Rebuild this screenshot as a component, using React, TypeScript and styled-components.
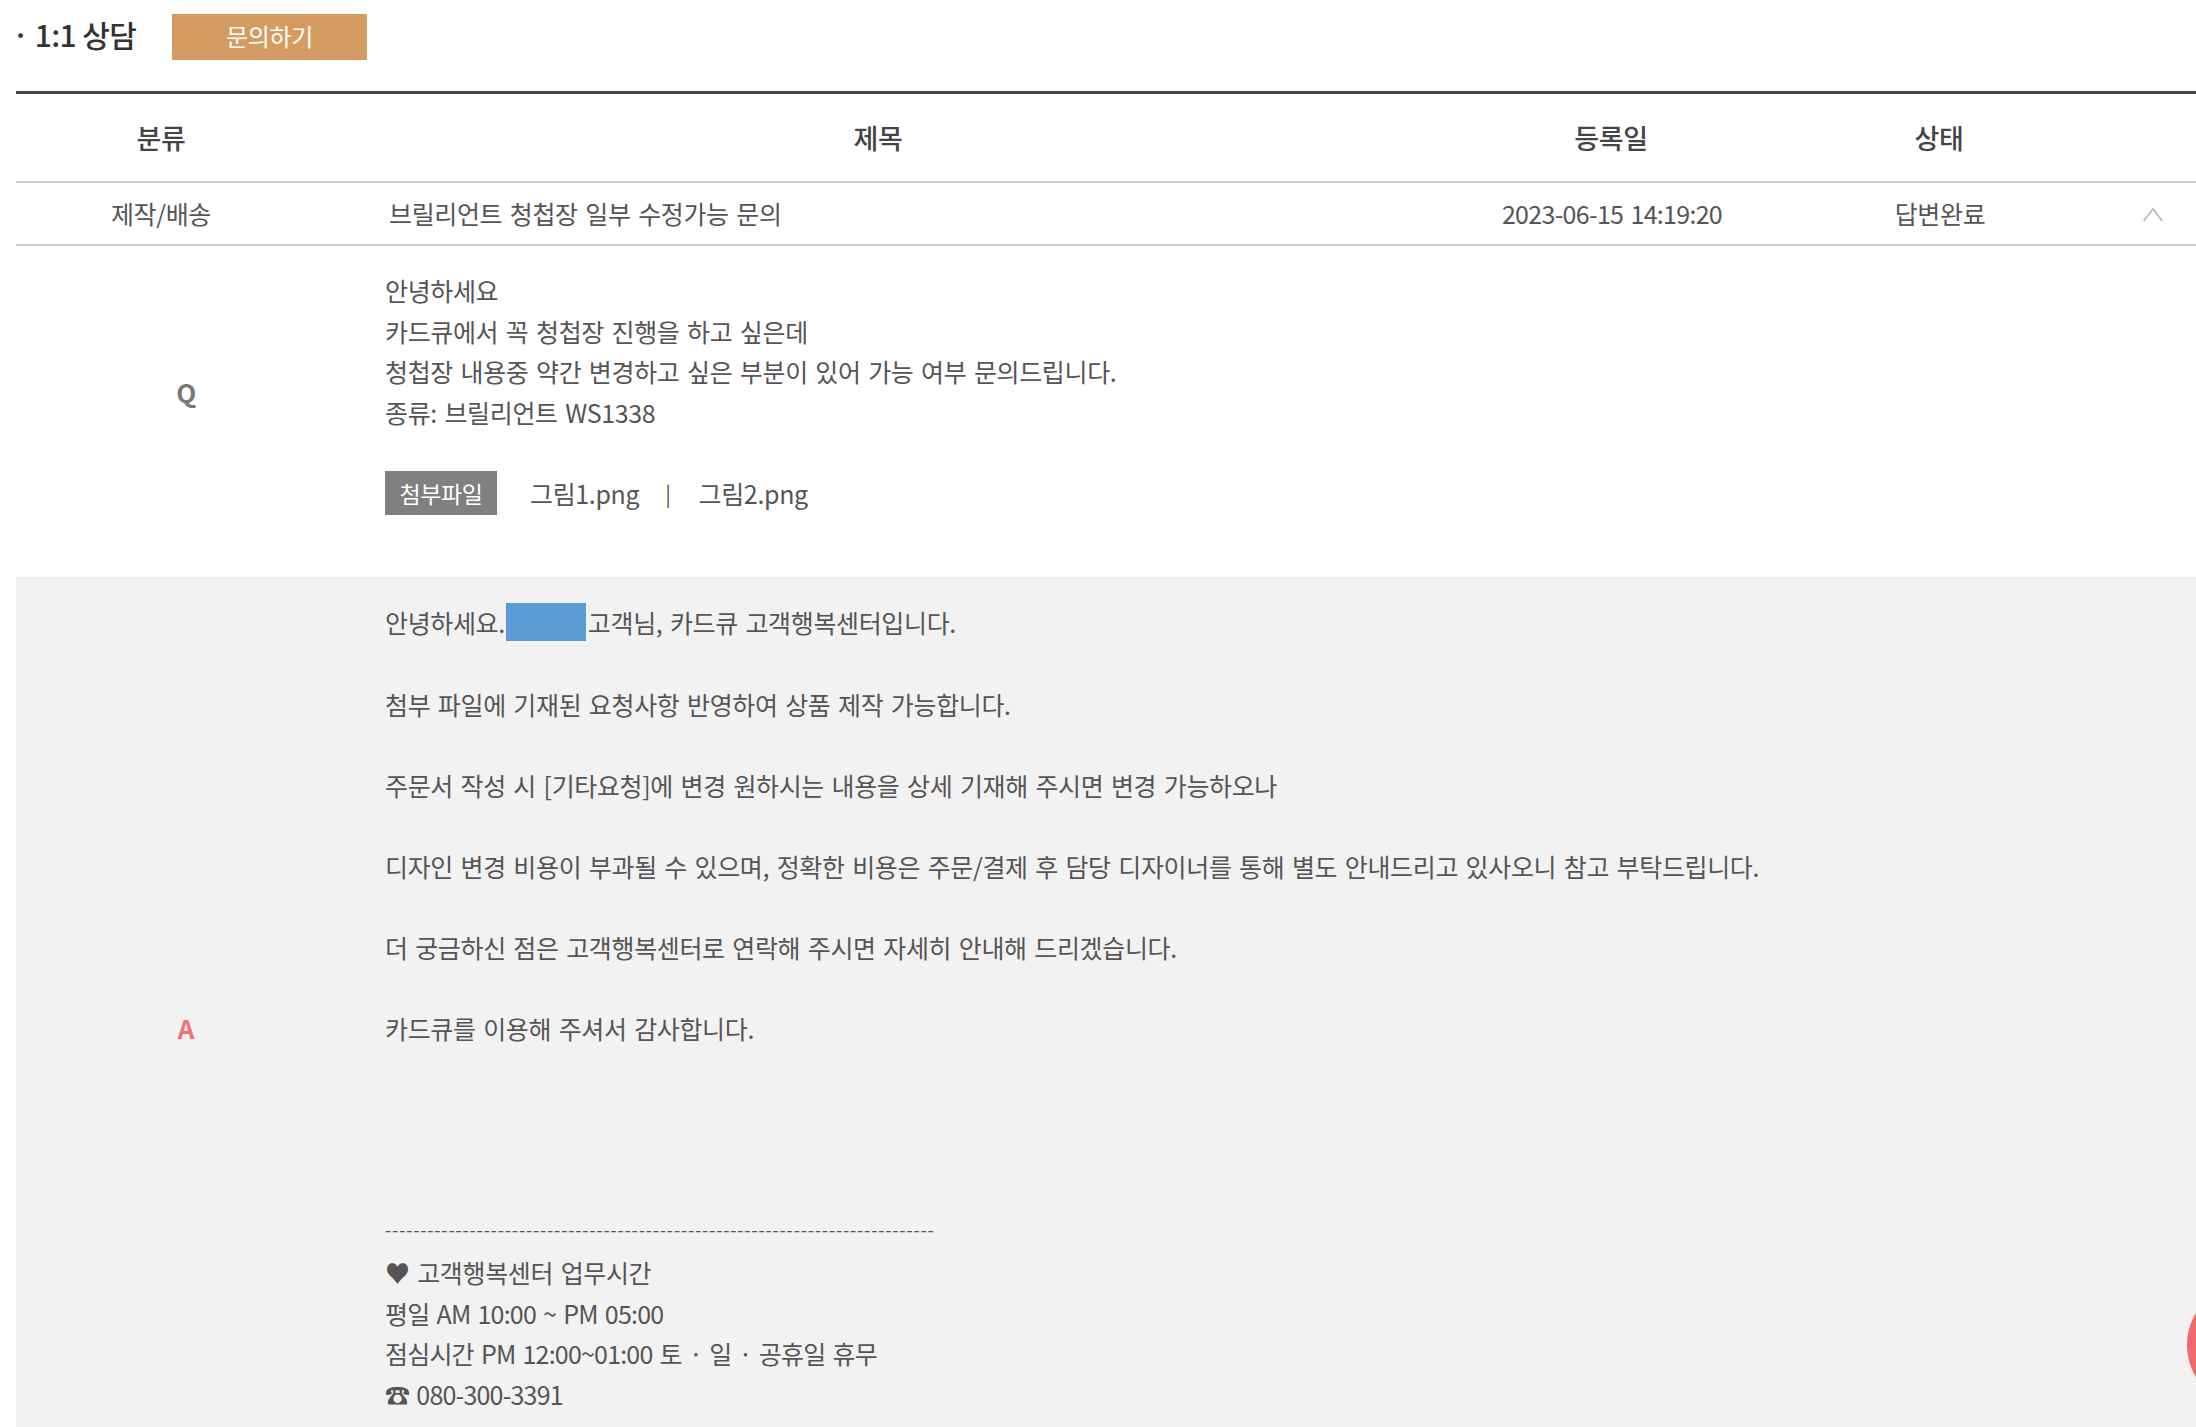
import React from "react";
import styled, { createGlobalStyle } from "styled-components";

const COLUMNS = "290px 1144px 322px 334px 90px";

const GlobalStyle = createGlobalStyle`
  html, body {
    margin: 0;
    padding: 0;
    height: 1427px;
    overflow: hidden;
    background: #fff;
  }
  body {
    font-family: "Noto Sans CJK KR", "Noto Sans", sans-serif;
    color: #555;
  }
`;

function App() {
  return (
    <S.Page>
      <GlobalStyle />
      <S.TitleBar>
        <S.Title>· 1:1 상담</S.Title>
        <S.AskButton>문의하기</S.AskButton>
      </S.TitleBar>

      <S.HeadRow>
        <span>분류</span>
        <span>제목</span>
        <span>등록일</span>
        <span>상태</span>
        <span />
      </S.HeadRow>

      <S.ItemRow>
        <span>제작/배송</span>
        <S.Subject>브릴리언트 청첩장 일부 수정가능 문의</S.Subject>
        <S.DateText>2023-06-15 14:19:20</S.DateText>
        <S.Status>답변완료</S.Status>
        <S.Chevron viewBox="0 0 24 16" fill="none">
          <path d="M2 15 L12 2 L22 15" stroke="#bdbdbd" strokeWidth="2" />
        </S.Chevron>
      </S.ItemRow>

      <S.Block>
        <S.Mark>Q</S.Mark>
        <S.Body>
          <S.Text>안녕하세요</S.Text>
          <S.Text>카드큐에서 꼭 청첩장 진행을 하고 싶은데</S.Text>
          <S.Text>청첩장 내용중 약간 변경하고 싶은 부분이 있어 가능 여부 문의드립니다.</S.Text>
          <S.Text>종류: 브릴리언트 WS1338</S.Text>
          <S.Files>
            <S.FileBadge>첨부파일</S.FileBadge>
            <span>그림1.png</span>
            <S.FileSep>|</S.FileSep>
            <span>그림2.png</span>
          </S.Files>
        </S.Body>
      </S.Block>

      <S.Block $answer>
        <S.Mark $answer>A</S.Mark>
        <S.Body>
          <S.Paragraph>
            안녕하세요.<S.Redacted />고객님, 카드큐 고객행복센터입니다.
          </S.Paragraph>
          <S.Paragraph>첨부 파일에 기재된 요청사항 반영하여 상품 제작 가능합니다.</S.Paragraph>
          <S.Paragraph>주문서 작성 시 [기타요청]에 변경 원하시는 내용을 상세 기재해 주시면 변경 가능하오나</S.Paragraph>
          <S.Paragraph>
            디자인 변경 비용이 부과될 수 있으며, 정확한 비용은 주문/결제 후 담당 디자이너를 통해 별도 안내드리고 있사오니 참고 부탁드립니다.
          </S.Paragraph>
          <S.Paragraph>더 궁금하신 점은 고객행복센터로 연락해 주시면 자세히 안내해 드리겠습니다.</S.Paragraph>
          <S.Text>카드큐를 이용해 주셔서 감사합니다.</S.Text>
          <S.Signature>
            <S.Dashes>{"-".repeat(78)}</S.Dashes>
            <S.Text>♥ 고객행복센터 업무시간</S.Text>
            <S.Text $tight>평일 AM 10:00 ~ PM 05:00</S.Text>
            <S.Text $tight>점심시간 PM 12:00~01:00 토 · 일 · 공휴일 휴무</S.Text>
            <S.Text $tight>☎ 080-300-3391</S.Text>
          </S.Signature>
        </S.Body>
      </S.Block>

      <S.FloatButton />
    </S.Page>
  );
}

//@styled
const S = {
  Page: styled.main`
    padding-left: 16px;
    letter-spacing: -0.35px;
    word-spacing: 2.3px;
  `,
  TitleBar: styled.div`
    height: 91px;
    box-sizing: border-box;
    padding-top: 14px;
    display: flex;
    align-items: flex-start;
    gap: 36px;
  `,
  Title: styled.h2`
    margin: 0 0 0 -4px;
    width: 124px;
    font-size: 30px;
    line-height: 40px;
    font-weight: 500;
    color: #333;
    white-space: nowrap;
    letter-spacing: -0.6px;
    word-spacing: 0;
  `,
  AskButton: styled.button`
    width: 195px;
    height: 46px;
    border: 0;
    padding: 0 0 4px;
    background: #d49c60;
    color: #fff;
    font-family: inherit;
    font-size: 24px;
    letter-spacing: -0.3px;
  `,
  HeadRow: styled.div`
    display: grid;
    grid-template-columns: ${COLUMNS};
    align-items: center;
    justify-items: center;
    height: 92px;
    box-sizing: border-box;
    border-top: 3px solid #444;
    border-bottom: 2px solid #ccc;
    font-size: 27px;
    font-weight: 500;
    color: #444;
    letter-spacing: -0.3px;
  `,
  ItemRow: styled.div`
    display: grid;
    grid-template-columns: ${COLUMNS};
    align-items: center;
    justify-items: center;
    height: 63px;
    padding-bottom: 2px;
    box-sizing: border-box;
    border-bottom: 2px solid #ccc;
    font-size: 25px;
    color: #555;
  `,
  Subject: styled.span`
    justify-self: start;
    padding-left: 83px;
  `,
  DateText: styled.span`
    margin-left: 2px;
    letter-spacing: -0.7px;
  `,
  Status: styled.span`
    margin-left: 2px;
  `,
  Chevron: styled.svg`
    width: 22px;
    height: 15px;
    margin: 3px 0 0 4px;
  `,
  Block: styled.section<{ $answer?: boolean }>`
    display: grid;
    grid-template-columns: 340px 1fr;
    align-items: center;
    padding: ${({ $answer }) => ($answer ? "25px 0 26px" : "24px 0 62px")};
    background: ${({ $answer }) => ($answer ? "#f2f2f2" : "#fff")};
  `,
  Mark: styled.div<{ $answer?: boolean }>`
    text-align: center;
    font-size: 26px;
    font-weight: 700;
    margin-top: -2px;
    color: ${({ $answer }) => ($answer ? "#ee7275" : "#777")};
  `,
  Body: styled.div`
    padding-left: 29px;
    font-size: 25px;
    line-height: 40.6px;
    color: #555;
  `,
  Text: styled.p<{ $tight?: boolean }>`
    margin: 0;
    white-space: nowrap;
    letter-spacing: ${({ $tight }) => ($tight ? "-0.8px" : "inherit")};
  `,
  Paragraph: styled.p`
    margin: 0 0 40.6px;
    white-space: nowrap;
  `,
  Redacted: styled.span`
    display: inline-block;
    width: 80px;
    height: 38px;
    margin: -10px 2px -10px 1px;
    vertical-align: 2px;
    background: #5b9bd5;
  `,
  Files: styled.div`
    display: flex;
    align-items: center;
    margin-top: 39px;
    height: 44px;
  `,
  FileBadge: styled.span`
    width: 112px;
    height: 44px;
    margin-right: 33px;
    display: flex;
    align-items: center;
    justify-content: center;
    background: #808080;
    color: #fff;
    font-size: 23px;
  `,
  FileSep: styled.span`
    margin: 0 28px 0 26px;
    font-size: 21px;
  `,
  Signature: styled.div`
    margin-top: 157px;
    padding-bottom: 41px;
  `,
  Dashes: styled.p`
    margin: 0;
    font-size: 18px;
    line-height: 46px;
    white-space: nowrap;
    overflow: hidden;
    width: 550px;
    letter-spacing: 0.8px;
  `,
  FloatButton: styled.div`
    position: fixed;
    top: 1282px;
    left: 2187px;
    width: 126px;
    height: 126px;
    border-radius: 50%;
    background: #f2686c;
  `,
};

export default App;
